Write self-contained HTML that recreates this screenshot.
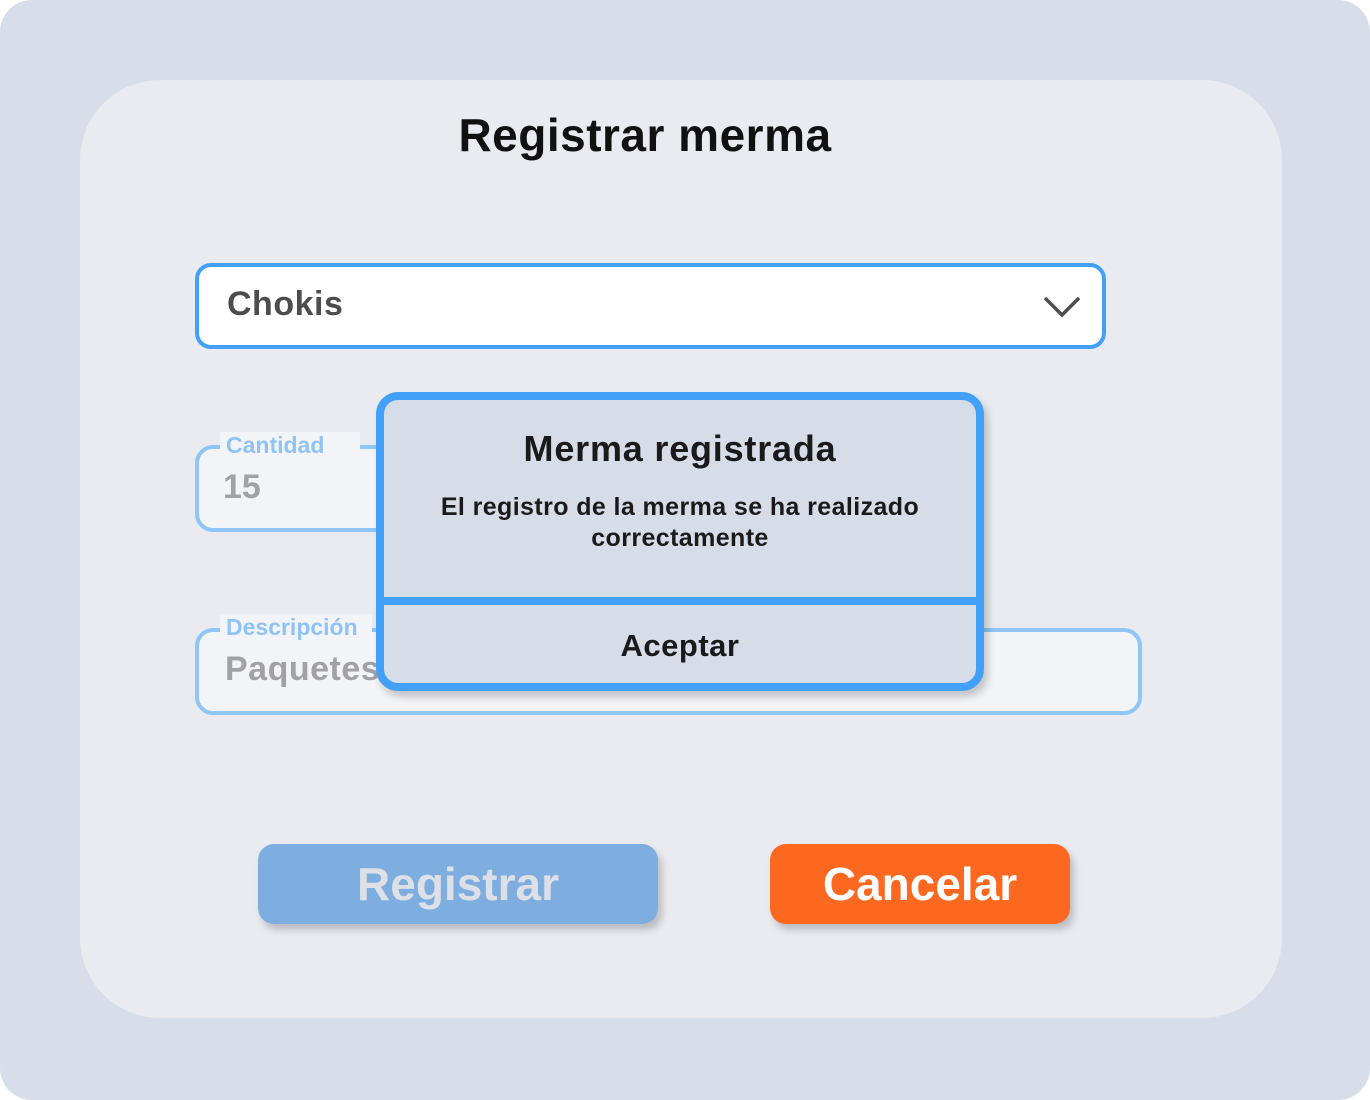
<!DOCTYPE html>
<html><head><meta charset="utf-8"><style>
*{box-sizing:border-box;margin:0;padding:0}
body{width:1370px;height:1100px;background:#fff;font-family:"Liberation Sans",sans-serif;position:relative;overflow:hidden}
.bg{position:absolute;left:0;top:0;width:1370px;height:1100px;background:#d7dde9;border-radius:32px}
.card{position:absolute;left:80px;top:80px;width:1202px;height:938px;background:#e9ebf0;border-radius:80px}
.abs{position:absolute}
h1{position:absolute;left:0;width:1290px;top:108px;text-align:center;font-size:46px;font-weight:bold;color:#111;letter-spacing:0.5px}
.sel{left:195px;top:263px;width:911px;height:86px;border:4px solid #42a0f8;border-radius:16px;background:#fff}
.field{border:4px solid #8fc6f6;border-radius:18px;background:#f3f4f8}
.lbl{background:#f3f4f8;color:#8fc3f5;font-size:23px;font-weight:bold;padding-left:6px}
.val{color:#a2a2a6;font-size:34px;font-weight:bold}
.modal{left:376px;top:392px;width:608px;height:299px;border:8px solid #42a0f8;border-radius:22px;background:#d7dce9;box-shadow:4px 6px 8px rgba(0,0,0,.2);overflow:hidden}
.btn{border-radius:16px;text-align:center;font-size:46px;font-weight:bold;line-height:80px;box-shadow:4px 6px 8px rgba(0,0,0,.2)}
</style></head><body>
<div class="bg"></div>
<div class="card"></div>
<h1>Registrar merma</h1>
<div class="abs sel"></div>
<div class="abs" style="left:227px;top:285px;font-size:34px;font-weight:bold;color:#4d4d4f;letter-spacing:0.5px">Chokis</div>
<svg class="abs" style="left:1042px;top:294px" width="40" height="26"><path d="M3 4 L20 21 L37 4" fill="none" stroke="#4d4d4f" stroke-width="3.5"/></svg>

<div class="abs field" style="left:195px;top:445px;width:300px;height:87px"></div>
<div class="abs lbl" style="left:220px;top:432px;width:140px;height:28px">Cantidad</div>
<div class="abs val" style="left:223px;top:468px">15</div>

<div class="abs field" style="left:195px;top:628px;width:947px;height:87px"></div>
<div class="abs lbl" style="left:220px;top:614px;width:152px;height:28px">Descripción</div>
<div class="abs val" style="left:225px;top:650px;letter-spacing:0.5px">Paquetes</div>

<div class="abs modal">
 <div class="abs" style="left:0;top:28px;width:592px;text-align:center;font-size:36px;font-weight:bold;color:#1a1a1a;letter-spacing:0.8px">Merma registrada</div>
 <div class="abs" style="left:0;top:92px;width:592px;text-align:center;font-size:25px;line-height:31px;font-weight:bold;color:#1a1a1a;letter-spacing:0.4px">El registro de la merma se ha realizado<br>correctamente</div>
 <div class="abs" style="left:0;top:197px;width:592px;height:8px;background:#42a0f8"></div>
 <div class="abs" style="left:0;top:228px;width:592px;text-align:center;font-size:31px;font-weight:bold;color:#1a1a1a;letter-spacing:0.5px">Aceptar</div>
</div>

<div class="abs btn" style="left:258px;top:844px;width:400px;height:80px;background:#7eaee0;color:#dde0e6">Registrar</div>
<div class="abs btn" style="left:770px;top:844px;width:300px;height:80px;background:#fd6820;color:#fff">Cancelar</div>
</body></html>
